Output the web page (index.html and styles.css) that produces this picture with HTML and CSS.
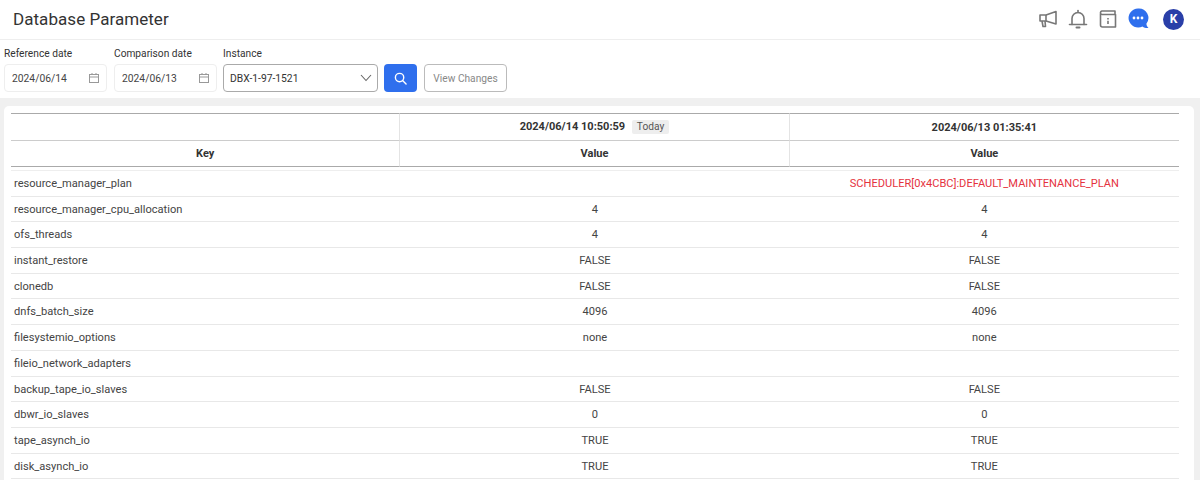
FILE: index.html
```html
<!DOCTYPE html>
<html lang="en">
<head>
    <meta charset="UTF-8">
    <title>Database Parameter</title>
    <link rel="stylesheet" href="styles.css">
</head>
<body>
<header class="topbar">
    <h1 class="title">Database Parameter</h1>
    <div class="topIcons">
        <svg class="icon" viewBox="0 0 20 20" width="20" height="20" fill="none" stroke="#777" stroke-width="1.6" stroke-linejoin="round">
            <path d="M18 2.500V15L8 12H2V6H8z"/>
            <path d="M8 6v6M4 12l1 5.500H7.500L7 12"/>
        </svg>
        <svg class="icon" viewBox="0 0 20 20" width="20" height="20" fill="none" stroke="#777" stroke-width="1.6" stroke-linecap="round" stroke-linejoin="round">
            <path d="M1.500 15.500h17"/>
            <path d="M4 15.500V9.500a6 6 0 0 1 12 0v6"/>
            <path d="M10 3.500V1.500"/>
            <path d="M8.500 18.500h3" stroke-width="2"/>
        </svg>
        <svg class="icon" viewBox="0 0 20 20" width="20" height="20" fill="none" stroke="#777" stroke-width="1.6" stroke-linejoin="round">
            <path d="M2.500 4.500V16a2 2 0 0 0 2 2h13V5.500H4a1.700 1.700 0 0 1-1.500-1.500A1.700 1.700 0 0 1 4 2h13v3.500"/>
            <path d="M10 9v1.500M10 11.800v3.200"/>
        </svg>
        <svg class="icon" viewBox="0 0 22 22" width="22" height="22">
            <path d="M10 .5a9.500 9.500 0 1 0 4.500 17.900c1.500 1.300 3.500 1.800 6 1.600-1.300-1.200-2-2.600-2.100-4.300A9.500 9.500 0 0 0 10 .5z" fill="#2f6fed"/>
            <circle cx="6" cy="10" r="1.400" fill="#fff"/>
            <circle cx="10" cy="10" r="1.400" fill="#fff"/>
            <circle cx="14" cy="10" r="1.400" fill="#fff"/>
        </svg>
        <div class="avatar">K</div>
    </div>
</header>

<div class="filters">
    <div class="field">
        <label class="fieldLabel">Reference date</label>
        <div class="dateBox">
            <span>2024/06/14</span>
            <svg class="calendar" viewBox="0 0 12 12" width="12" height="12" fill="none" stroke="#999" stroke-width="1">
                <rect x="1.500" y="2.500" width="9" height="8"/>
                <path d="M1.500 5h9M4 1v2M8 1v2"/>
            </svg>
        </div>
    </div>
    <div class="field">
        <label class="fieldLabel">Comparison date</label>
        <div class="dateBox">
            <span>2024/06/13</span>
            <svg class="calendar" viewBox="0 0 12 12" width="12" height="12" fill="none" stroke="#999" stroke-width="1">
                <rect x="1.500" y="2.500" width="9" height="8"/>
                <path d="M1.500 5h9M4 1v2M8 1v2"/>
            </svg>
        </div>
    </div>
    <div class="field">
        <label class="fieldLabel">Instance</label>
        <div class="selectBox">
            <span>DBX-1-97-1521</span>
            <svg viewBox="0 0 12 8" width="12" height="8" fill="none" stroke="#666" stroke-width="1.100">
                <path d="M1 1l5 5.500L11 1"/>
            </svg>
        </div>
    </div>
    <button class="searchBtn">
        <svg viewBox="0 0 14 14" width="13" height="13" fill="none" stroke="#fff" stroke-width="1.500" stroke-linecap="round">
            <circle cx="6" cy="6" r="4.500"/>
            <path d="M9.500 9.500L13 13"/>
        </svg>
    </button>
    <button class="changesBtn">View Changes</button>
</div>

<main class="content">
    <div class="card">
        <table class="paramTable">
            <thead>
                <tr class="dateRow">
                    <th></th>
                    <th>2024/06/14 10:50:59 <span class="todayTag">Today</span></th>
                    <th>2024/06/13 01:35:41</th>
                </tr>
                <tr class="nameRow">
                    <th>Key</th>
                    <th>Value</th>
                    <th>Value</th>
                </tr>
            </thead>
            <tbody>
                <tr><td>resource_manager_plan</td><td></td><td class="diff">SCHEDULER[0x4CBC]:DEFAULT_MAINTENANCE_PLAN</td></tr>
                <tr><td>resource_manager_cpu_allocation</td><td>4</td><td>4</td></tr>
                <tr><td>ofs_threads</td><td>4</td><td>4</td></tr>
                <tr><td>instant_restore</td><td>FALSE</td><td>FALSE</td></tr>
                <tr><td>clonedb</td><td>FALSE</td><td>FALSE</td></tr>
                <tr><td>dnfs_batch_size</td><td>4096</td><td>4096</td></tr>
                <tr><td>filesystemio_options</td><td>none</td><td>none</td></tr>
                <tr><td>fileio_network_adapters</td><td></td><td></td></tr>
                <tr><td>backup_tape_io_slaves</td><td>FALSE</td><td>FALSE</td></tr>
                <tr><td>dbwr_io_slaves</td><td>0</td><td>0</td></tr>
                <tr><td>tape_asynch_io</td><td>TRUE</td><td>TRUE</td></tr>
                <tr><td>disk_asynch_io</td><td>TRUE</td><td>TRUE</td></tr>
            </tbody>
        </table>
    </div>
</main>
</body>
</html>
```

FILE: styles.css
```css
html, body {
    margin: 0;
    padding: 0;
    height: 480px;
    overflow: hidden;
}

body {
    font-family: Roboto, "Liberation Sans", sans-serif;
    font-size: 11px;
    color: #333;
    background: #fff;
}

.topbar {
    height: 38px;
    display: flex;
    align-items: center;
    justify-content: space-between;
    padding: 0 16px 1px 13px;
    border-bottom: 1px solid #eee;
}

.title {
    margin: 0;
    font-size: 17px;
    font-weight: 400;
    letter-spacing: 0.05px;
    color: #333;
}

.topIcons {
    display: flex;
    align-items: center;
    gap: 10px;
}

.avatar {
    width: 21px;
    height: 21px;
    margin-left: 3px;
    border-radius: 50%;
    background: #2a3fa8;
    color: #fff;
    font-size: 12px;
    font-weight: 700;
    line-height: 21px;
    text-align: center;
}

.filters {
    height: 58px;
    box-sizing: border-box;
    display: flex;
    align-items: flex-end;
    gap: 6px;
    padding: 0 4px 6px;
    font-size: 10.3px;
}

.field {
    display: flex;
    flex-direction: column;
    gap: 3px;
}

.field:nth-child(2) {
    margin-left: 1px;
}

.fieldLabel {
    font-size: 10.2px;
    line-height: 15px;
    color: #333;
}

.dateBox {
    width: 103px;
    height: 28px;
    box-sizing: border-box;
    display: flex;
    align-items: center;
    justify-content: space-between;
    padding: 0 6px 0 7px;
    border: 1px solid #eee;
    border-radius: 4px;
    color: #444;
}

.selectBox {
    width: 155px;
    height: 28px;
    box-sizing: border-box;
    display: flex;
    align-items: center;
    justify-content: space-between;
    padding: 0 5px 0 6px;
    border: 1px solid #aaa;
    border-radius: 4px;
    color: #333;
}

.searchBtn {
    width: 33px;
    height: 28px;
    padding: 0;
    display: flex;
    align-items: center;
    justify-content: center;
    border: 0;
    border-radius: 4px;
    background: #2f6fed;
}

.changesBtn {
    width: 83px;
    height: 28px;
    margin-left: 1px;
    padding: 0;
    font-family: inherit;
    font-size: 10.2px;
    color: #888;
    background: #fff;
    border: 1px solid #bbb;
    border-radius: 4px;
}

.content {
    height: 382px;
    box-sizing: border-box;
    padding: 8px 6px 0 4px;
    background: #f0f0f0;
}

.card {
    height: 100%;
    box-sizing: border-box;
    padding: 7px 15px 0 7px;
    background: #fff;
    border-radius: 5px 5px 0 0;
}

.paramTable {
    width: 100%;
    table-layout: fixed;
    border-collapse: separate;
    border-spacing: 0;
}

.paramTable th {
    font-size: 11px;
    font-weight: 700;
    color: #333;
    text-align: center;
    padding: 0;
    border-right: 1px solid #e4e4e4;
}

.paramTable th:last-child {
    border-right: 0;
}

.dateRow th {
    height: 26px;
    border-top: 1px solid #aaa;
    border-bottom: 1px solid #ccc;
}

.nameRow th {
    height: 25px;
    border-bottom: 1px solid #aaa;
}

.todayTag {
    display: inline-block;
    margin-left: 4px;
    padding: 0 5px;
    font-size: 10.2px;
    font-weight: 400;
    line-height: 14px;
    color: #555;
    background: #eee;
    border-radius: 2px;
}

.paramTable tbody:before {
    content: "";
    display: block;
    height: 3px;
}

.paramTable td {
    box-sizing: border-box;
    height: 25.7px;
    padding: 6px 0 0;
    font-size: 11.1px;
    line-height: 13px;
    text-align: center;
    vertical-align: top;
    color: #444;
    border-bottom: 1px solid #e8e8e8;
}

.paramTable tbody tr:first-child td {
    height: 26.7px;
    border-top: 1px solid #eee;
}

.paramTable td:first-child {
    padding-left: 3px;
    text-align: left;
}

.paramTable td.diff {
    color: #e5323e;
}
```
